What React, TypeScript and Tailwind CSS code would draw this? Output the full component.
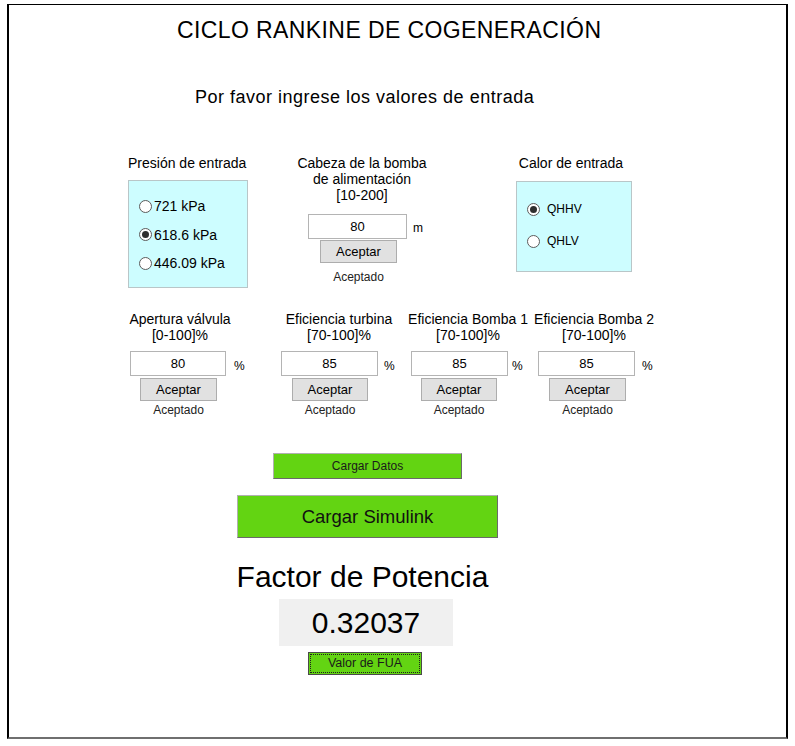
import React from 'react';

type RadioOpt = { label: string; checked?: boolean };

function Radio({ checked, label, textClass, gapClass }: RadioOpt & { textClass: string; gapClass: string }) {
  return (
    <div className={`flex h-5 items-center ${gapClass}`}>
      <span className="flex h-[13px] w-[13px] shrink-0 items-center justify-center rounded-full border border-[#5c5c5c] bg-white">
        {checked && <span className="h-[7px] w-[7px] rounded-full bg-[#2e2e2e]" />}
      </span>
      <span className={`${textClass} leading-5 whitespace-nowrap`}>{label}</span>
    </div>
  );
}

function AcceptBtn({ className }: { className: string }) {
  return (
    <div
      className={`flex h-[23px] items-center justify-center border border-[#adadad] bg-[#e1e1e1] text-[13px] leading-none ${className}`}
    >
      Aceptar
    </div>
  );
}

interface FieldProps {
  lines: string[];
  value: string;
  colClass: string;
  inputClass: string;
  pctClass: string;
  btnClass: string;
}

function PercentField({ lines, value, colClass, inputClass, pctClass, btnClass }: FieldProps) {
  return (
    <div className={`flex shrink-0 flex-col ${colClass}`}>
      {lines.map((l) => (
        <p key={l} className="text-center text-[14px] leading-4 whitespace-nowrap">
          {l}
        </p>
      ))}
      <div className="mt-2 flex items-start">
        <div
          className={`flex h-[25px] shrink-0 items-center justify-center border border-[#b4b4b4] bg-white text-[13px] ${inputClass}`}
        >
          {value}
        </div>
        <span className={`mt-[7px] text-[12px] leading-4 ${pctClass}`}>%</span>
      </div>
      <AcceptBtn className={`mt-[2px] ${btnClass}`} />
      <p className={`mt-[2px] text-center text-[12px] leading-[14px] text-[#222] ${btnClass}`}>Aceptado</p>
    </div>
  );
}

export default function App() {
  return (
    <div className="h-[746px] w-[795px] overflow-hidden bg-white pt-[4px] pl-[7px] font-[Liberation_Sans,Arial,sans-serif] text-black">
      <div className="h-[735px] w-[781px] border-t border-r-2 border-b-2 border-l-2 border-t-black border-r-black border-b-[#6f6f6f] border-l-black">
        {/* title */}
        <h1 className="mt-[12px] ml-[168px] text-[23px] leading-[26px] font-normal tracking-[0.4px] whitespace-nowrap">
          CICLO RANKINE DE COGENERACIÓN
        </h1>
        <p className="mt-[44px] ml-[186px] text-[18px] leading-5 tracking-[0.5px] whitespace-nowrap">
          Por favor ingrese los valores de entrada
        </p>

        {/* row 1 */}
        <div className="mt-[48px] flex h-[133px] items-start">
          <div className="ml-[119px] flex w-[120px] shrink-0 flex-col">
            <p className="pr-[6px] text-center text-[14px] leading-4 whitespace-nowrap">Presión de entrada</p>
            <div className="mt-[9px] flex h-[108px] flex-col gap-[8.5px] border border-[#b9c6c8] bg-[#cdfdff] pt-[15px] pl-[10px]">
              <Radio label="721 kPa" textClass="text-[14px]" gapClass="gap-[2px]" />
              <Radio label="618.6 kPa" checked textClass="text-[14px]" gapClass="gap-[2px]" />
              <Radio label="446.09 kPa" textClass="text-[14px]" gapClass="gap-[2px]" />
            </div>
          </div>

          <div className="ml-[48px] flex w-[132px] shrink-0 flex-col">
            <p className="text-center text-[14px] leading-4 whitespace-nowrap">Cabeza de la bomba</p>
            <p className="text-center text-[14px] leading-4 whitespace-nowrap">de alimentación</p>
            <p className="text-center text-[14px] leading-4 whitespace-nowrap">[10-200]</p>
            <div className="mt-[11px] ml-[12px] flex items-start">
              <div className="flex h-[25px] w-[99px] shrink-0 items-center justify-center border border-[#b4b4b4] bg-white text-[13px]">
                80
              </div>
              <span className="mt-[6px] ml-[6px] text-[12px] leading-4">m</span>
            </div>
            <AcceptBtn className="mt-[1px] ml-[24px] w-[77px]" />
            <p className="mt-[7px] ml-[24px] w-[77px] text-center text-[12px] leading-[14px] text-[#222]">Aceptado</p>
          </div>

          <div className="ml-[88px] flex w-[116px] shrink-0 flex-col">
            <p className="pr-[6px] text-center text-[14px] leading-4 whitespace-nowrap">Calor de entrada</p>
            <div className="mt-[10px] flex h-[91px] flex-col gap-[12px] border border-[#b9c6c8] bg-[#cdfdff] pt-[17px] pl-[10px]">
              <Radio label="QHHV" checked textClass="text-[12px]" gapClass="gap-[7px]" />
              <Radio label="QHLV" textClass="text-[12px]" gapClass="gap-[7px]" />
            </div>
          </div>
        </div>

        {/* row 2 */}
        <div className="mt-[23px] flex h-[106px] items-start">
          <PercentField
            lines={['Apertura válvula', '[0-100]%']}
            value="80"
            colClass="ml-[111px] w-[120px]"
            inputClass="ml-[10px] w-[96px]"
            pctClass="ml-[8px]"
            btnClass="ml-[20px] w-[77px]"
          />
          <PercentField
            lines={['Eficiencia turbina', '[70-100]%']}
            value="85"
            colClass="ml-[38px] w-[122px]"
            inputClass="ml-[3px] w-[97px]"
            pctClass="ml-[6px]"
            btnClass="ml-[14px] w-[76px]"
          />
          <PercentField
            lines={['Eficiencia Bomba 1', '[70-100]%']}
            value="85"
            colClass="ml-[8px] w-[120px]"
            inputClass="ml-[3px] w-[97px]"
            pctClass="ml-[4px]"
            btnClass="ml-[13px] w-[76px]"
          />
          <PercentField
            lines={['Eficiencia Bomba 2', '[70-100]%']}
            value="85"
            colClass="ml-[5px] w-[122px]"
            inputClass="ml-[5px] w-[97px]"
            pctClass="ml-[7px]"
            btnClass="ml-[16px] w-[77px]"
          />
        </div>

        {/* actions */}
        <div className="mt-[36px] ml-[264px] flex h-[26px] w-[189px] items-center justify-center border border-[#b0b0b0] border-r-[#6a6a6a] border-b-[#6a6a6a] bg-[#63d412] text-[12px] text-[#1a1a1a]">
          Cargar Datos
        </div>
        <div className="mt-[16px] ml-[228px] flex h-[43px] w-[261px] items-center justify-center border border-[#b0b0b0] border-r-[#6a6a6a] border-b-[#6a6a6a] bg-[#63d412] text-[18.5px] text-[#111]">
          Cargar Simulink
        </div>

        <p className="mt-[22px] ml-[225px] w-[257px] text-center text-[30px] leading-[34px] whitespace-nowrap">
          Factor de Potencia
        </p>
        <div className="mt-[5px] ml-[270px] flex h-[47px] w-[174px] items-center justify-center bg-[#f0f0f0] text-[30px]">
          0.32037
        </div>
        <div className="mt-[6px] ml-[299px] h-[23px] w-[114px] border border-[#4a4a4a] bg-[#63d412] p-[1px]">
          <div className="flex h-full w-full items-center justify-center border border-dotted border-[#1f1f1f] text-[12.5px] text-[#1a1a1a]">
            Valor de FUA
          </div>
        </div>
      </div>
    </div>
  );
}
